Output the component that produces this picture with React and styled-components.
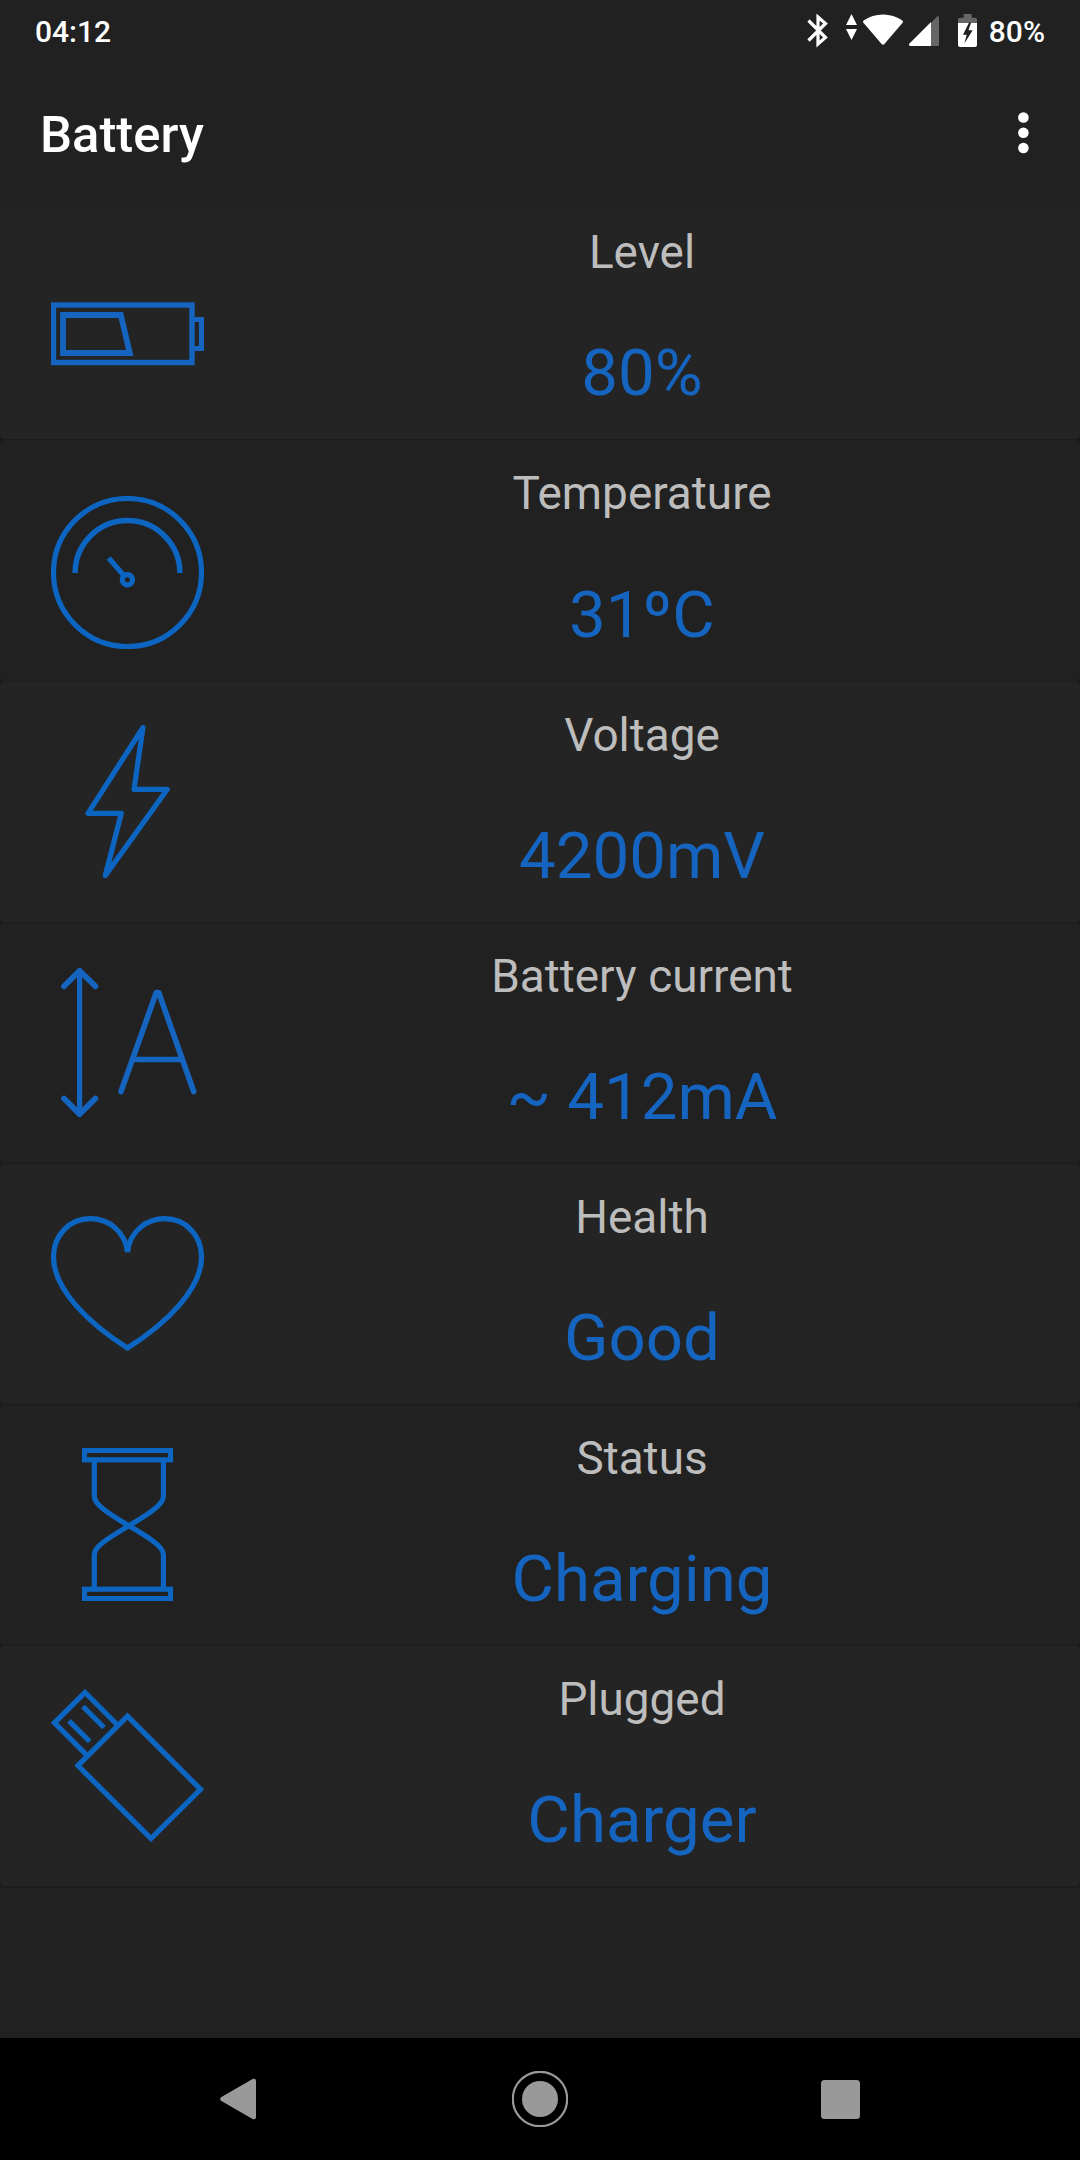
import React from 'react'
import styled, { createGlobalStyle, css } from 'styled-components';

const GlobalStyle = createGlobalStyle`
body {
    margin: 0;
    background-color: #212121;
    font-family: Roboto, sans-serif;
}
`

const centerIt = css`
display: flex;
align-items: center;
justify-content: center;
`

const Screen = styled.div`
width: 1080px;
height: 2160px;
display: flex;
flex-direction: column;
background-color: #212121;
overflow: hidden;
`

const StatusBar = styled.div`
height: 62px;
flex-shrink: 0;
display: flex;
align-items: center;
justify-content: space-between;
padding: 0 35px;
box-sizing: border-box;
color: white;
font-size: 30px;
font-weight: 500;
`

const StatusIcons = styled.div`
display: flex;
align-items: center;

svg {
    display: block;
    margin-right: 11px;
}
`

const Toolbar = styled.div`
height: 145px;
flex-shrink: 0;
display: flex;
align-items: center;
justify-content: space-between;
padding: 0 50px 0 40px;
box-sizing: border-box;
`

const Title = styled.h1`
margin: 0;
color: white;
font-size: 50.8px;
font-weight: 500;
`

const MenuButton = styled.button`
width: 14px;
height: 50px;
padding: 0 0 4px;
border: none;
background-color: transparent;

svg {
    display: block;
}
`

const List = styled.div`
flex: 1;
display: flex;
flex-direction: column;
justify-content: flex-start;
overflow: hidden;
`

/* the list is scrolled a little, so the first card starts under the toolbar */
const Cards = styled.div`
margin-top: -8px;
padding-bottom: 2px;
display: flex;
flex-direction: column;
gap: 1px;
background-color: #1c1c1c;
`

const Card = styled.div`
height: ${props => props.$tall ? 241 : 240}px;
display: flex;
border-radius: 5px;
background-color: #212121;

&:nth-child(odd) {
    background-color: #242424;
}
`

const IconBox = styled.div`
width: 153px;
height: 153px;
flex-shrink: 0;
padding-left: 51px;
padding-top: ${props => props.$top || 43}px;

svg {
    display: block;
    fill: none;
    stroke: ${props => props.$color || '#0d65c2'};
    stroke-width: 5.2;
}
`

const Info = styled.div`
flex: 1;
padding-top: 26px;
text-align: center;
`

const Label = styled.div`
line-height: 54px;
font-size: 45.9px;
color: #bdbdbd;
`

const Value = styled.div`
margin-top: ${props => props.$tall ? 56 : 55}px;
line-height: 78px;
font-size: 65.4px;
color: #1565c0;
`

const NavBar = styled.div`
height: 122px;
flex-shrink: 0;
display: grid;
grid-template-columns: 302px 302px 298px;
justify-content: center;
padding-right: 4px;
background-color: black;
`

const NavButton = styled.button`
${centerIt};
padding: 0;
border: none;
background-color: transparent;
`

const BatteryIcon = () => (
    <svg width="153" height="153">
        <rect x="2.5" y="48" width="138.5" height="57.5" strokeWidth="5.4" />
        <path d="M141 62.5H150.5V91.5H141" />
        <path d="M12 58H69.8L78.8 96H12Z" strokeWidth="5.8" />
    </svg>
)

const GaugeIcon = () => (
    <svg width="153" height="153">
        <circle cx="76.5" cy="76.5" r="74" />
        <path d="M24.1 77A52.4 52.4 0 0 1 128.9 77" strokeWidth="5.5" />
        <circle cx="76.4" cy="83.7" r="5.1" />
        <path d="M57.7 62L73.3 80" />
    </svg>
)

const BoltIcon = () => (
    <svg width="153" height="153">
        <path d="M92 2.5L37 88.3H70.3L54.3 150.5L116.3 64.3H83Z" strokeLinejoin="round" />
    </svg>
)

const CurrentIcon = () => (
    <svg width="153" height="153" strokeLinecap="round" strokeLinejoin="round">
        <path d="M28.6 5V148" />
        <path d="M13 20.3L28.6 4.7L44.4 20.3M13 132.5L28.6 148.1L44.4 132.5" strokeWidth="5.8" />
        <path d="M70 125.5L105.3 26.5H107.7L142.7 125.5M82 93.5H131.5" strokeWidth="5.6" />
    </svg>
)

const HeartIcon = () => (
    <svg width="153" height="153">
        <path d="M76.5 45.3C74.5 25 58 11.7 39.3 11.7C18.6 11.7 2.5 28 2.5 50C2.5 82 37 116 76.5 141C116 116 150.5 82 150.5 50C150.5 28 134.4 11.7 113.7 11.7C95 11.7 78.5 25 76.5 45.3" strokeLinejoin="miter" strokeMiterlimit="2" />
    </svg>
)

const HourglassIcon = () => (
    <svg width="153" height="153">
        <rect x="33.5" y="2.4" width="86" height="9.4" />
        <rect x="33.5" y="141.2" width="86" height="9.4" />
        <path d="M43.3 14V48.5C43.3 57 60 67 77.8 77.8C96 88.5 112.4 98 112.4 106.5V139" />
        <path d="M112.4 14V48.5C112.4 57 96 67 77.8 77.8C60 88.5 43.3 98 43.3 106.5V139" />
    </svg>
)

const UsbIcon = () => (
    <svg width="153" height="153">
        <path d="M76.4 27.2L149.5 100.3L100 149.5L26.9 76.6Z" />
        <path d="M66.5 36L34 3.5L3.5 33.8L36 66.3" />
        <path d="M32 17.5L53 38.5M18 31.8L38.7 52.5" />
    </svg>
)

const cards = [
    { label: 'Level', value: '80%', icon: <BatteryIcon />, top: 58, color: '#1565c0' },
    { label: 'Temperature', value: '31ºC', icon: <GaugeIcon />, top: 56, tall: true },
    { label: 'Voltage', value: '4200mV', icon: <BoltIcon /> },
    { label: 'Battery current', value: '~ 412mA', icon: <CurrentIcon />, color: '#1565c0' },
    { label: 'Health', value: 'Good', icon: <HeartIcon /> },
    { label: 'Status', value: 'Charging', icon: <HourglassIcon /> },
    { label: 'Plugged', value: 'Charger', icon: <UsbIcon /> },
]

const StatusBarIcons = () => (
    <svg width="172" height="34" viewBox="806 14 172 34" fill="white">
        {/* bluetooth */}
        <path d="M808.5 20.5L825.5 37.5L818 44V17L825.5 23.5L808.5 40.5" fill="none" stroke="white" strokeWidth="3.2" />
        {/* data arrows */}
        <path d="M851.5 14L857 25H846ZM851.5 40L857 29H846Z" />
        {/* wifi */}
        <path d="M863.6 20.6C874.5 12.3 891.5 12.3 902.4 20.6Q903.4 21.6 902.6 22.8L884.6 43.8Q883 45.6 881.4 43.8L863.4 22.8Q862.6 21.6 863.6 20.6Z" />
        {/* signal */}
        <path d="M931 46V23L937 16.5Q939 15.5 939 17.5V44.5Q939 46 937.5 46Z" fill="#666" />
        <path d="M931 22V46H910.5Q908 45.5 909.5 43.5Z" />
        {/* battery */}
        <path d="M958 24V19.5Q958 17.7 960 17.7H963.7V14H971.7V17.7H975Q977 17.7 977 19.5V24Z" fill="#666" />
        <path d="M958 23H977V45Q977 47 975 47H960Q958 47 958 45Z" />
        <path d="M969.3 22L963 34.7H966.7L964.3 43.5L972.7 30.3H968.5L971 23Z" fill="#212121" />
    </svg>
)

const App = () => {
    return (
        <>
            <GlobalStyle />
            <Screen>
                <StatusBar>
                    <span>04:12</span>
                    <StatusIcons>
                        <StatusBarIcons />
                        <span>80%</span>
                    </StatusIcons>
                </StatusBar>
                <Toolbar>
                    <Title>Battery</Title>
                    <MenuButton aria-label="More options">
                        <svg width="14" height="46" fill="white">
                            <circle cx="7.4" cy="7.5" r="5.3" />
                            <circle cx="7.4" cy="22.7" r="5.3" />
                            <circle cx="7.4" cy="38" r="5.3" />
                        </svg>
                    </MenuButton>
                </Toolbar>
                <List>
                    <Cards>
                        {cards.map(card => (
                            <Card key={card.label} $tall={card.tall}>
                                <IconBox $top={card.top} $color={card.color}>{card.icon}</IconBox>
                                <Info>
                                    <Label>{card.label}</Label>
                                    <Value $tall={card.tall}>{card.value}</Value>
                                </Info>
                            </Card>
                        ))}
                    </Cards>
                </List>
                <NavBar>
                    <NavButton aria-label="Back">
                        <svg width="36" height="42" fill="#999">
                            <path d="M33 .8Q36 0 36 3V39Q36 42 33 41.2L1 22.8Q-.6 21 1 19.2Z" />
                        </svg>
                    </NavButton>
                    <NavButton aria-label="Home">
                        <svg width="56" height="56">
                            <circle cx="28" cy="28" r="27.2" fill="none" stroke="#999" strokeWidth="2.2" />
                            <circle cx="28" cy="28" r="18" fill="#999" />
                        </svg>
                    </NavButton>
                    <NavButton aria-label="Recents">
                        <svg width="39" height="39">
                            <rect width="39" height="39" rx="3.5" fill="#999" />
                        </svg>
                    </NavButton>
                </NavBar>
            </Screen>
        </>
    )
}

export default App
